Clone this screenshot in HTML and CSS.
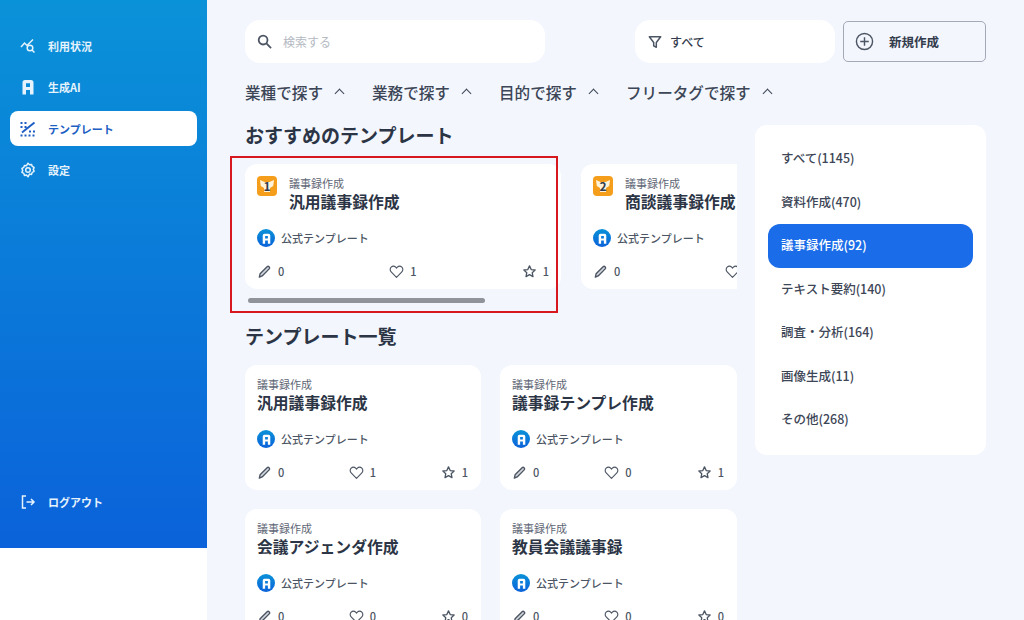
FILE: index.html
```html
<!DOCTYPE html>
<html lang="ja">
<head>
  <meta charset="UTF-8">
  <meta name="viewport" content="width=device-width, initial-scale=1.0">
  <title>テンプレート</title>
  <link rel="stylesheet" href="styles.css">
</head>
<body>
  <svg class="defs" width="0" height="0">
    <symbol id="i-pen" viewBox="0 0 16 16"><path d="M2.500 14l.8-3.500 7.500-7.500a1.500 1.500 0 0 1 2.100 0l.1.100a1.500 1.500 0 0 1 0 2.100l-7.500 7.500z" fill="#d5d8dd" stroke="currentColor" stroke-width="1.500" stroke-linejoin="round"/></symbol>
    <symbol id="i-heart" viewBox="0 0 16 16"><path d="M8 14.200 2.300 8.400a3.500 3.500 0 0 1 0-5 3.400 3.400 0 0 1 4.800 0l.9.900.9-.9a3.400 3.400 0 0 1 4.800 0 3.500 3.500 0 0 1 0 5z" fill="none" stroke="currentColor" stroke-width="1.200" stroke-linejoin="round"/></symbol>
    <symbol id="i-star" viewBox="0 0 16 16"><path d="M8 2l1.800 3.900 4.200.5-3.100 2.900.8 4.200L8 11.400l-3.700 2.100.8-4.200L2 6.400l4.200-.5z" fill="none" stroke="currentColor" stroke-width="1.400" stroke-linejoin="round"/></symbol>
    <symbol id="i-logo" viewBox="0 0 16 16"><path fill-rule="evenodd" d="M2.500 15.500V3.500A2.500 2.500 0 0 1 5 1h6a2.500 2.500 0 0 1 2.500 2.500v12H10V11H6v4.500zM6 4.200V8h4V4.200z" fill="currentColor"/></symbol>
    <symbol id="i-badge" viewBox="0 0 20 20"><rect width="20" height="20" rx="4" fill="#f59e1b"/><path d="M3 4l4.500 2h5L17 4l-.8 6-3.200 2v4H7v-4L3.800 10z" fill="#fff3dc"/></symbol>
  </svg>

  <div class="layout">
    <aside class="side">
      <nav class="side-nav">
        <a class="nav-item">
          <svg class="nav-icon" viewBox="0 0 16 16" fill="none" stroke="currentColor" stroke-width="1.500"><path d="M1 9l3.500-4 2.500 2.500L13 1.500"/><circle cx="10" cy="10" r="2.800"/><path d="M12 12l2.500 2.500"/></svg>
          利用状況
        </a>
        <a class="nav-item">
          <svg class="nav-icon"><use href="#i-logo"/></svg>
          生成AI
        </a>
        <a class="nav-item active">
          <svg class="nav-icon" viewBox="0 0 16 16" fill="none" stroke="currentColor" stroke-width="2"><path d="M0.500 2h2M4.500 2h2M0.500 6h2M4.500 6h2M0.500 14.500h2M4.500 14.500h2M8.500 14.500h2M12.500 14.500h2M2 11.500 14.500 1.500M9 10.500h2M13 10.500h2"/></svg>
          テンプレート
        </a>
        <a class="nav-item">
          <svg class="nav-icon" viewBox="0 0 16 16" fill="none" stroke="currentColor" stroke-width="1.500"><path d="M8 1.200l1.500 1.500 2.100-.3.600 2 1.900 1-.8 2 .8 2-1.900 1-.6 2-2.100-.3L8 14.800l-1.500-1.700-2.100.3-.6-2-1.900-1 .8-2-.8-2 1.900-1 .6-2 2.100.3z" stroke-linejoin="round"/><circle cx="8" cy="8" r="2.300"/></svg>
          設定
        </a>
      </nav>
      <a class="nav-item logout">
        <svg class="nav-icon" viewBox="0 0 16 16" fill="none" stroke="currentColor" stroke-width="1.500"><path d="M6 2H2.500v12H6M6.500 8H14M11 5l3 3-3 3"/></svg>
        ログアウト
      </a>
    </aside>

    <main class="main">
      <div class="topbar">
        <div class="search">
          <svg class="search-icon" viewBox="0 0 16 16" fill="none" stroke="currentColor" stroke-width="1.900"><circle cx="6.500" cy="6.500" r="4.700"/><path d="M10 10l5 5"/></svg>
          <span>検索する</span>
        </div>
        <div class="filter">
          <svg class="filter-icon" viewBox="0 0 16 16" fill="none" stroke="currentColor" stroke-width="1.700"><path d="M1.500 2h13L9.500 8.500V14l-3-1.500v-4z" stroke-linejoin="round"/></svg>
          <span>すべて</span>
        </div>
        <button class="new-btn">
          <svg class="plus-icon" viewBox="0 0 20 20" fill="none" stroke="currentColor" stroke-width="1.500"><circle cx="10" cy="10" r="8.500"/><path d="M10 5.500v9M5.500 10h9"/></svg>
          <span>新規作成</span>
        </button>
      </div>

      <div class="tags">
        <span class="tag">業種で探す<i class="caret"></i></span>
        <span class="tag">業務で探す<i class="caret"></i></span>
        <span class="tag">目的で探す<i class="caret"></i></span>
        <span class="tag">フリータグで探す<i class="caret"></i></span>
      </div>

      <div class="content">
        <div class="left">
          <h2 class="title">おすすめのテンプレート</h2>
          <div class="carousel">
            <div class="card wide">
              <div class="card-head">
                <span class="rank"><svg><use href="#i-badge"/></svg><b>1</b></span>
                <div>
                  <div class="cat">議事録作成</div>
                  <div class="name">汎用議事録作成</div>
                </div>
              </div>
              <div class="owner"><span class="owner-logo"><svg><use href="#i-logo"/></svg></span>公式テンプレート</div>
              <div class="stats">
                <span class="stat"><svg><use href="#i-pen"/></svg>0</span>
                <span class="stat"><svg><use href="#i-heart"/></svg>1</span>
                <span class="stat"><svg><use href="#i-star"/></svg>1</span>
              </div>
            </div>
            <div class="card wide">
              <div class="card-head">
                <span class="rank"><svg><use href="#i-badge"/></svg><b>2</b></span>
                <div>
                  <div class="cat">議事録作成</div>
                  <div class="name">商談議事録作成</div>
                </div>
              </div>
              <div class="owner"><span class="owner-logo"><svg><use href="#i-logo"/></svg></span>公式テンプレート</div>
              <div class="stats">
                <span class="stat"><svg><use href="#i-pen"/></svg>0</span>
                <span class="stat"><svg><use href="#i-heart"/></svg>0</span>
                <span class="stat"><svg><use href="#i-star"/></svg>0</span>
              </div>
            </div>
          </div>
          <div class="scroll-track"><div class="scroll-thumb"></div></div>

          <h2 class="title list-title">テンプレート一覧</h2>
          <div class="card-grid">
            <div class="card">
              <div class="cat">議事録作成</div>
              <div class="name">汎用議事録作成</div>
              <div class="owner"><span class="owner-logo"><svg><use href="#i-logo"/></svg></span>公式テンプレート</div>
              <div class="stats">
                <span class="stat"><svg><use href="#i-pen"/></svg>0</span>
                <span class="stat"><svg><use href="#i-heart"/></svg>1</span>
                <span class="stat"><svg><use href="#i-star"/></svg>1</span>
              </div>
            </div>
            <div class="card">
              <div class="cat">議事録作成</div>
              <div class="name">議事録テンプレ作成</div>
              <div class="owner"><span class="owner-logo"><svg><use href="#i-logo"/></svg></span>公式テンプレート</div>
              <div class="stats">
                <span class="stat"><svg><use href="#i-pen"/></svg>0</span>
                <span class="stat"><svg><use href="#i-heart"/></svg>0</span>
                <span class="stat"><svg><use href="#i-star"/></svg>1</span>
              </div>
            </div>
            <div class="card">
              <div class="cat">議事録作成</div>
              <div class="name">会議アジェンダ作成</div>
              <div class="owner"><span class="owner-logo"><svg><use href="#i-logo"/></svg></span>公式テンプレート</div>
              <div class="stats">
                <span class="stat"><svg><use href="#i-pen"/></svg>0</span>
                <span class="stat"><svg><use href="#i-heart"/></svg>0</span>
                <span class="stat"><svg><use href="#i-star"/></svg>0</span>
              </div>
            </div>
            <div class="card">
              <div class="cat">議事録作成</div>
              <div class="name">教員会議議事録</div>
              <div class="owner"><span class="owner-logo"><svg><use href="#i-logo"/></svg></span>公式テンプレート</div>
              <div class="stats">
                <span class="stat"><svg><use href="#i-pen"/></svg>0</span>
                <span class="stat"><svg><use href="#i-heart"/></svg>0</span>
                <span class="stat"><svg><use href="#i-star"/></svg>0</span>
              </div>
            </div>
          </div>
        </div>

        <ul class="cats">
          <li>すべて(1145)</li>
          <li>資料作成(470)</li>
          <li class="active">議事録作成(92)</li>
          <li>テキスト要約(140)</li>
          <li>調査・分析(164)</li>
          <li>画像生成(11)</li>
          <li>その他(268)</li>
        </ul>
      </div>

      <div class="highlight"></div>
    </main>
  </div>
</body>
</html>
```

FILE: styles.css
```css
* {
  box-sizing: border-box;
}
html, body {
  margin: 0;
  height: 620px;
  overflow: hidden;
}
body {
  font-family: "Noto Sans CJK JP", "Noto Sans", sans-serif;
  color: #333c4d;
  background: #fff;
}
.defs {
  position: absolute;
}
.layout {
  display: flex;
  height: 620px;
}

/* sidebar */
.side {
  width: 207px;
  height: 548px;
  flex: none;
  padding: 28px 10px 0;
  display: flex;
  flex-direction: column;
  background: linear-gradient(180deg, #0a92d8 0%, #0b62da 100%);
}
.side-nav {
  flex: 1;
}
.nav-item {
  display: flex;
  align-items: center;
  gap: 12px;
  height: 35px;
  margin-bottom: 6.500px;
  padding-left: 10px;
  border-radius: 8px;
  color: #e6f3fc;
  font-size: 11px;
  font-weight: 700;
}
.nav-icon {
  width: 16px;
  height: 16px;
  flex: none;
}
.nav-item.active {
  background: #fff;
  color: #1e5fc4;
}
.logout {
  margin-bottom: 29px;
}

/* main */
.main {
  position: relative;
  flex: 1;
  padding: 20px 38px 0;
  background: #f3f6fd;
  overflow: hidden;
}
.topbar {
  display: flex;
  align-items: center;
  height: 43px;
}
.search, .filter {
  display: flex;
  align-items: center;
  height: 43px;
  background: #fff;
  border-radius: 15px;
}
.search {
  width: 300px;
  margin-right: 90px;
  padding-left: 12px;
  color: #b4b9c2;
  font-size: 12px;
}
.search-icon {
  width: 15px;
  height: 15px;
  margin-right: 11px;
  color: #4c5563;
}
.filter {
  width: 200px;
  margin-right: 8px;
  padding-left: 13px;
  font-size: 12px;
  font-weight: 500;
}
.filter-icon {
  width: 14px;
  height: 14px;
  margin-right: 8px;
  color: #4c5563;
}
.new-btn {
  display: flex;
  align-items: center;
  width: 143px;
  height: 41px;
  padding: 0 0 0 11px;
  border: 1px solid #a3a9b6;
  border-radius: 5px;
  background: #f3f6fd;
  color: #333c4d;
  font-family: inherit;
  font-size: 12.500px;
  font-weight: 700;
}
.plus-icon {
  width: 19px;
  height: 19px;
  margin-right: 15px;
  color: #4c5563;
}

.tags {
  display: flex;
  gap: 28px;
  margin-top: 17px;
  height: 23px;
  align-items: center;
}
.tag {
  display: flex;
  align-items: center;
  font-size: 15.600px;
  font-weight: 500;
  color: #3d4656;
}
.caret {
  width: 7px;
  height: 7px;
  margin: 4px 1px 0 13px;
  border-left: 1.500px solid #3d4656;
  border-top: 1.500px solid #3d4656;
  transform: rotate(45deg);
}

.content {
  display: grid;
  grid-template-columns: 492px 231px;
  column-gap: 18px;
  margin-top: 17px;
}
.title {
  margin: 0;
  height: 29px;
  line-height: 29px;
  font-size: 19px;
  font-weight: 700;
  color: #2c3545;
}
.carousel {
  display: flex;
  gap: 20px;
  margin-top: 15px;
  overflow: hidden;
}
.card {
  height: 125px;
  padding: 11px 12px 0;
  background: #fff;
  border-radius: 12px;
}
.card.wide {
  width: 316px;
  flex: none;
}
.card-head {
  display: flex;
  gap: 12px;
  white-space: nowrap;
}
.rank {
  position: relative;
  width: 20px;
  height: 20px;
  margin-top: 1px;
  flex: none;
}
.rank svg {
  display: block;
  width: 20px;
  height: 20px;
}
.rank b {
  position: absolute;
  inset: 0;
  text-align: center;
  font-size: 12px;
  line-height: 20px;
  color: #333c4d;
}
.cat {
  font-size: 11px;
  line-height: 17px;
  color: #5f6775;
}
.name {
  font-size: 15.800px;
  line-height: 20px;
  font-weight: 700;
  color: #2c3545;
  white-space: nowrap;
}
.owner {
  display: flex;
  align-items: center;
  gap: 6px;
  margin-top: 17px;
  height: 18px;
  font-size: 11px;
  font-weight: 500;
  color: #4c5563;
}
.owner-logo {
  display: flex;
  align-items: center;
  justify-content: center;
  width: 18px;
  height: 18px;
  border-radius: 50%;
  background: linear-gradient(180deg, #0a92d8, #0b62da);
  color: #fff;
}
.owner-logo svg {
  width: 11px;
  height: 11px;
}
.stats {
  display: flex;
  justify-content: space-between;
  margin-top: 16px;
}
.stat {
  display: flex;
  align-items: center;
  gap: 6px;
  font-size: 11px;
  font-weight: 500;
  color: #4c5563;
}
.stat svg {
  width: 15px;
  height: 15px;
}
.scroll-track {
  height: 5px;
  margin: 9px 0 0 3px;
}
.scroll-thumb {
  width: 237px;
  height: 5px;
  border-radius: 3px;
  background: #909399;
}
.list-title {
  margin-top: 18px;
}
.card-grid {
  display: grid;
  grid-template-columns: 236px 237px;
  gap: 19px;
  margin-top: 15px;
}
.card-grid .stats {
  padding-right: 1px;
}

/* category list */
.cats {
  list-style: none;
  margin: 5px 0 0;
  padding: 12px 13px;
  height: 330px;
  background: #fff;
  border-radius: 12px;
}
.cats li {
  height: 43.500px;
  line-height: 42px;
  padding-left: 13px;
  font-size: 12.500px;
  font-weight: 500;
  color: #3d4656;
}
.cats li.active {
  background: #1a6ce8;
  border-radius: 12px;
  color: #fff;
}

/* red annotation box */
.highlight {
  position: absolute;
  left: 23px;
  top: 156px;
  width: 328px;
  height: 157px;
  border: 2px solid #d8181f;
  pointer-events: none;
}
```
